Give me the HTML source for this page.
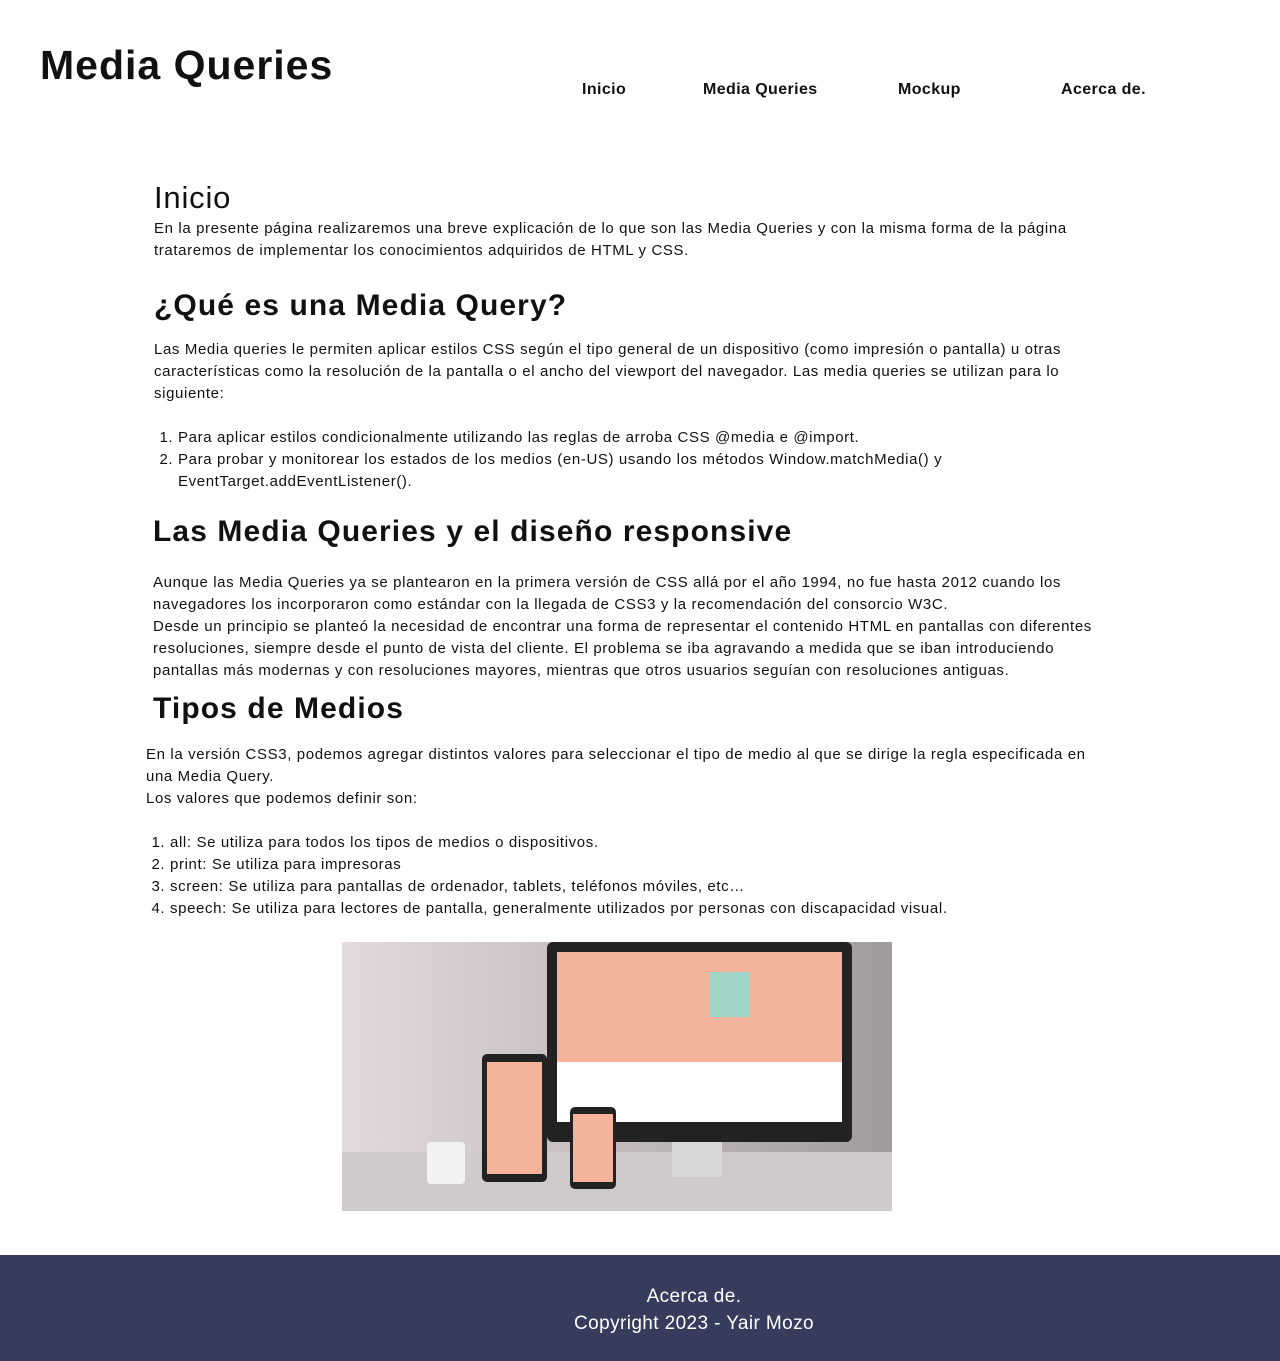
<!DOCTYPE html>
<html><head><meta charset="utf-8"><style>
body{margin:0;width:1280px;height:1361px;position:relative;font-family:"Liberation Sans",sans-serif;color:#111;background:#fff;overflow:hidden}
.a{position:absolute;margin:0;white-space:nowrap}
h1,h2{font-weight:bold}
.p{position:absolute;font-size:15px;line-height:22px;margin:0;white-space:nowrap;letter-spacing:0.62px}
.nav{position:absolute;top:81px;font-size:16px;font-weight:bold;letter-spacing:0.4px}
h2.a{letter-spacing:1.1px}
</style></head><body>
<h1 class="a" style="left:40px;top:40px;font-size:41px;line-height:50px;letter-spacing:1px">Media Queries</h1>
<div class="nav" style="left:582px">Inicio</div>
<div class="nav" style="left:703px">Media Queries</div>
<div class="nav" style="left:898px">Mockup</div>
<div class="nav" style="left:1061px">Acerca de.</div>

<h2 class="a" style="left:154px;top:179px;font-size:31px;font-weight:normal;line-height:38px;letter-spacing:0.8px">Inicio</h2>
<p class="p" style="left:154px;top:218px">En la presente página realizaremos una breve explicación de lo que son las Media Queries y con la misma forma de la página<br>trataremos de implementar los conocimientos adquiridos de HTML y CSS.</p>

<h2 class="a" style="left:154px;top:287px;font-size:30px;line-height:38px">¿Qué es una Media Query?</h2>
<p class="p" style="left:154px;top:339px">Las Media queries le permiten aplicar estilos CSS según el tipo general de un dispositivo (como impresión o pantalla) u otras<br>características como la resolución de la pantalla o el ancho del viewport del navegador. Las media queries se utilizan para lo<br>siguiente:</p>
<ol class="p" style="left:154px;top:427px;padding-left:24px">
<li>Para aplicar estilos condicionalmente utilizando las reglas de arroba CSS @media e @import.</li>
<li>Para probar y monitorear los estados de los medios (en-US) usando los métodos Window.matchMedia() y<br>EventTarget.addEventListener().</li></ol>

<h2 class="a" style="left:153px;top:513px;font-size:30px;line-height:38px">Las Media Queries y el diseño responsive</h2>
<p class="p" style="left:153px;top:572px">Aunque las Media Queries ya se plantearon en la primera versión de CSS allá por el año 1994, no fue hasta 2012 cuando los<br>navegadores los incorporaron como estándar con la llegada de CSS3 y la recomendación del consorcio W3C.<br>Desde un principio se planteó la necesidad de encontrar una forma de representar el contenido HTML en pantallas con diferentes<br>resoluciones, siempre desde el punto de vista del cliente. El problema se iba agravando a medida que se iban introduciendo<br>pantallas más modernas y con resoluciones mayores, mientras que otros usuarios seguían con resoluciones antiguas.</p>

<h2 class="a" style="left:153px;top:690px;font-size:30px;line-height:38px">Tipos de Medios</h2>
<p class="p" style="left:146px;top:744px">En la versión CSS3, podemos agregar distintos valores para seleccionar el tipo de medio al que se dirige la regla especificada en<br>una Media Query.<br>Los valores que podemos definir son:</p>
<ol class="p" style="left:146px;top:832px;padding-left:24px">
<li>all: Se utiliza para todos los tipos de medios o dispositivos.</li>
<li>print: Se utiliza para impresoras</li>
<li>screen: Se utiliza para pantallas de ordenador, tablets, teléfonos móviles, etc…</li>
<li>speech: Se utiliza para lectores de pantalla, generalmente utilizados por personas con discapacidad visual.</li></ol>

<svg class="a" style="left:342px;top:942px" width="550" height="269">
<defs><linearGradient id="w" x1="0" x2="1"><stop offset="0" stop-color="#e4dadd"/><stop offset="1" stop-color="#a09b9e"/></linearGradient></defs>
<rect width="550" height="269" fill="url(#w)"/>
<rect y="210" width="550" height="59" fill="#cfcacb"/>
<rect x="205" y="0" width="305" height="200" rx="6" fill="#222"/>
<rect x="215" y="10" width="285" height="170" fill="#f4b49c"/>
<rect x="215" y="120" width="285" height="60" fill="#fff"/>
<rect x="368" y="30" width="40" height="45" fill="#9fd6c8"/>
<rect x="330" y="200" width="50" height="35" fill="#d8d8d8"/>
<rect x="140" y="112" width="65" height="128" rx="5" fill="#222"/>
<rect x="145" y="120" width="55" height="112" fill="#f4b49c"/>
<rect x="228" y="165" width="46" height="82" rx="5" fill="#222"/>
<rect x="231" y="172" width="40" height="68" fill="#f4b49c"/>
<rect x="85" y="200" width="38" height="42" rx="4" fill="#f2f2f2"/>
</svg>

<div class="a" style="left:0;top:1255px;width:1280px;height:106px;background:#353c5c"></div>
<div class="a" style="left:0;top:1283px;width:1388px;text-align:center;color:#fff;font-size:19px;line-height:27px;letter-spacing:0.4px">Acerca de.<br>Copyright 2023 - Yair Mozo</div>
</body></html>
